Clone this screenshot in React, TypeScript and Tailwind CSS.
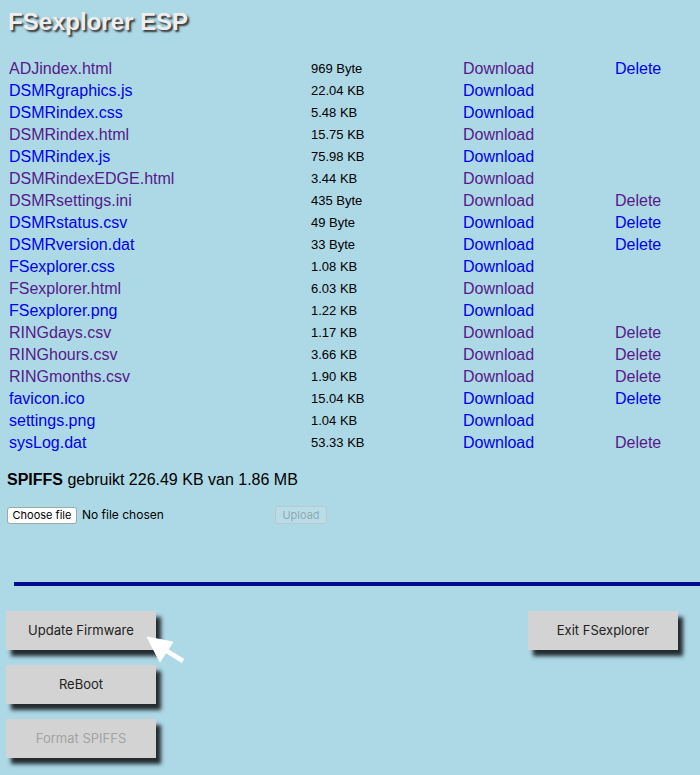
import React from "react";

const rows: { name: string; size: string; v: boolean; del: "none" | "p" | "b" }[] = [
  { name: "ADJindex.html", size: "969 Byte", v: true, del: "b" },
  { name: "DSMRgraphics.js", size: "22.04 KB", v: false, del: "none" },
  { name: "DSMRindex.css", size: "5.48 KB", v: false, del: "none" },
  { name: "DSMRindex.html", size: "15.75 KB", v: true, del: "none" },
  { name: "DSMRindex.js", size: "75.98 KB", v: false, del: "none" },
  { name: "DSMRindexEDGE.html", size: "3.44 KB", v: true, del: "none" },
  { name: "DSMRsettings.ini", size: "435 Byte", v: true, del: "p" },
  { name: "DSMRstatus.csv", size: "49 Byte", v: false, del: "b" },
  { name: "DSMRversion.dat", size: "33 Byte", v: false, del: "b" },
  { name: "FSexplorer.css", size: "1.08 KB", v: false, del: "none" },
  { name: "FSexplorer.html", size: "6.03 KB", v: true, del: "none" },
  { name: "FSexplorer.png", size: "1.22 KB", v: false, del: "none" },
  { name: "RINGdays.csv", size: "1.17 KB", v: true, del: "p" },
  { name: "RINGhours.csv", size: "3.66 KB", v: true, del: "p" },
  { name: "RINGmonths.csv", size: "1.90 KB", v: true, del: "p" },
  { name: "favicon.ico", size: "15.04 KB", v: false, del: "b" },
  { name: "settings.png", size: "1.04 KB", v: false, del: "none" },
  { name: "sysLog.dat", size: "53.33 KB", v: false, del: "p" },
];

const P = "text-[#551a8b]";
const B = "text-[#0000ee]";

function Btn({ label, disabled }: { label: string; disabled?: boolean }) {
  return (
    <div
      className={
        "w-[150px] h-[39px] flex items-center justify-center bg-[#d3d3d3] shadow-[5px_6px_4px_rgba(0,0,0,0.8)] text-[13px] font-['Inter',sans-serif] " +
        (disabled ? "text-[#a3a3a3]" : "text-[#222]")
      }
    >
      {label}
    </div>
  );
}

export default function App() {
  return (
    <div className="min-h-[775px] w-[700px] bg-[#add8e6] font-['Liberation_Sans',Arial,sans-serif] relative overflow-hidden">
      <div className="pt-[8px] pl-[8px] h-[57px]">
        <h1 className="text-[24px] leading-[28px] font-bold text-[#eeeeee] [text-shadow:2px_2px_2px_#333]">
          FSexplorer ESP
        </h1>
      </div>
      <div className="flex flex-col">
        {rows.map((r) => (
          <div key={r.name} className="grid grid-cols-[302px_152px_152px_1fr] h-[22px] items-center pl-[9px]">
            <span className={"text-[16px] " + (r.v ? P : B)}>{r.name}</span>
            <span className="text-[13px] text-black">{r.size}</span>
            <span className={"text-[16px] " + (r.v ? P : B)}>Download</span>
            <span className={"text-[16px] " + (r.del === "p" ? P : B)}>
              {r.del === "none" ? "" : "Delete"}
            </span>
          </div>
        ))}
      </div>
      <div className="mt-[17px] pl-[7px] h-[20px] flex items-center text-[16px] text-black">
        <b>SPIFFS</b>&nbsp;gebruikt 226.49 KB van 1.86 MB
      </div>
      <div className="mt-[15px] pl-[7px] flex items-center h-[20px] font-['Inter',sans-serif]">
        <div className="w-[193px] flex items-center">
          <span className="h-[17px] w-[70px] flex items-center justify-center bg-white border border-[#9aa] rounded-[3px] text-[11px] text-black">
            Choose file
          </span>
          <span className="ml-[5px] text-[12px] text-black">No file chosen</span>
        </div>
        <div className="ml-[75px] h-[18px] w-[52px] flex items-center justify-center border border-[#bcc8cc] rounded-[3px] bg-[#b9dde8] text-[11px] text-[#8fa9b1]">
          Upload
        </div>
      </div>
      <div className="mt-[57px] ml-[14px] h-[4px] bg-[#000a8c]" />
      <div className="mt-[25px] pl-[6px] pr-[22px] flex justify-between items-start">
        <div className="flex flex-col gap-[15px]">
          <Btn label="Update Firmware" />
          <Btn label="ReBoot" />
          <Btn label="Format SPIFFS" disabled />
        </div>
        <Btn label="Exit FSexplorer" />
      </div>
      <svg
        className="absolute left-[140px] top-[630px]"
        width="50"
        height="40"
        viewBox="0 0 50 40"
      >
        <g fill="white" stroke="white" strokeLinejoin="round">
          <polygon points="7,7 33,12 20,32" />
          <line x1="22" y1="18" x2="43" y2="31" strokeWidth="4.5" />
        </g>
      </svg>
    </div>
  );
}
